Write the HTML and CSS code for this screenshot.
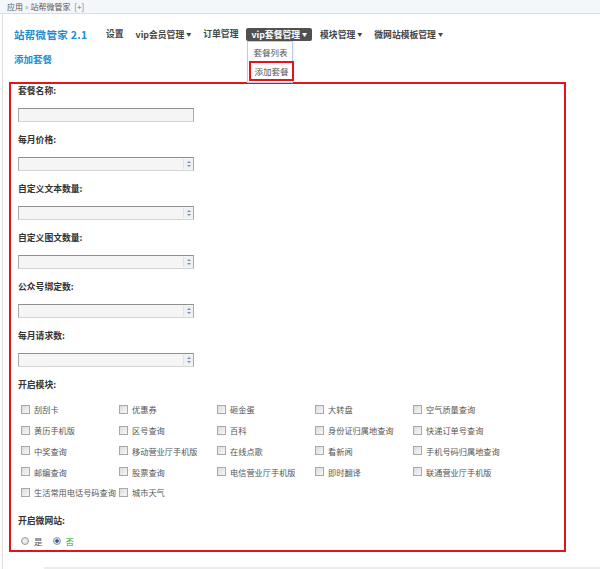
FILE: index.html
```html
<!DOCTYPE html>
<html lang="zh-CN">
<head>
    <meta charset="UTF-8">
    <title>添加套餐 - 站帮微管家</title>
    <link rel="stylesheet" href="styles.css">
</head>
<body>
    <div class="crumb">应用 <span class="sep">»</span> 站帮微管家 <span class="plus">[+]</span></div>
    <div class="main">
        <div class="head">
            <div class="brand">站帮微管家 2.1</div>
            <ul class="nav">
                <li>设置</li>
                <li>vip会员管理<span class="caret">▼</span></li>
                <li>订单管理</li>
                <li class="active">vip套餐管理<span class="caret">▼</span>
                    <ul class="dropdown">
                        <li>套餐列表</li>
                        <li class="marked">添加套餐</li>
                    </ul>
                </li>
                <li>模块管理<span class="caret">▼</span></li>
                <li>微网站模板管理<span class="caret">▼</span></li>
            </ul>
        </div>
        <div class="subtitle">添加套餐</div>

        <form class="panel">
            <div class="field">
                <label>套餐名称:</label>
                <input type="text" class="text-input">
            </div>
            <div class="field">
                <label>每月价格:</label>
                <div class="num-input"><input type="text"><span class="spin"><i class="up"></i><i class="down"></i></span></div>
            </div>
            <div class="field">
                <label>自定义文本数量:</label>
                <div class="num-input"><input type="text"><span class="spin"><i class="up"></i><i class="down"></i></span></div>
            </div>
            <div class="field">
                <label>自定义图文数量:</label>
                <div class="num-input"><input type="text"><span class="spin"><i class="up"></i><i class="down"></i></span></div>
            </div>
            <div class="field">
                <label>公众号绑定数:</label>
                <div class="num-input"><input type="text"><span class="spin"><i class="up"></i><i class="down"></i></span></div>
            </div>
            <div class="field">
                <label>每月请求数:</label>
                <div class="num-input"><input type="text"><span class="spin"><i class="up"></i><i class="down"></i></span></div>
            </div>

            <div class="field modules">
                <label>开启模块:</label>
                <div class="module-grid">
                    <span class="check"><input type="checkbox">刮刮卡</span>
                    <span class="check"><input type="checkbox">优惠券</span>
                    <span class="check"><input type="checkbox">砸金蛋</span>
                    <span class="check"><input type="checkbox">大转盘</span>
                    <span class="check"><input type="checkbox">空气质量查询</span>
                    <span class="check"><input type="checkbox">黄历手机版</span>
                    <span class="check"><input type="checkbox">区号查询</span>
                    <span class="check"><input type="checkbox">百科</span>
                    <span class="check"><input type="checkbox">身份证归属地查询</span>
                    <span class="check"><input type="checkbox">快递订单号查询</span>
                    <span class="check"><input type="checkbox">中奖查询</span>
                    <span class="check"><input type="checkbox">移动营业厅手机版</span>
                    <span class="check"><input type="checkbox">在线点歌</span>
                    <span class="check"><input type="checkbox">看新闻</span>
                    <span class="check"><input type="checkbox">手机号码归属地查询</span>
                    <span class="check"><input type="checkbox">邮编查询</span>
                    <span class="check"><input type="checkbox">股票查询</span>
                    <span class="check"><input type="checkbox">电信营业厅手机版</span>
                    <span class="check"><input type="checkbox">即时翻译</span>
                    <span class="check"><input type="checkbox">联通营业厅手机版</span>
                    <span class="check"><input type="checkbox">生活常用电话号码查询</span>
                    <span class="check"><input type="checkbox">城市天气</span>
                </div>
            </div>

            <div class="field site">
                <label>开启微网站:</label>
                <div class="radios">
                    <span class="radio"><input type="radio" name="site">是</span>
                    <span class="radio on"><input type="radio" name="site" checked>否</span>
                </div>
            </div>
        </form>

        <div class="actions">
            <button type="button">提交</button>
        </div>
    </div>
    <div class="hscroll"></div>
</body>
</html>
```

FILE: styles.css
```css
body {
    margin: 0;
    font-family: "Noto Sans CJK SC", "Liberation Sans", sans-serif;
    color: #333;
    background-color: #fff;
    overflow: hidden;
    height: 569px;
}
ul {
    list-style: none;
    margin: 0;
    padding: 0;
}
.crumb {
    height: 13px;
    line-height: 13px;
    padding-left: 7px;
    font-size: 8px;
    color: #555;
    background-color: #f3f7fc;
    border-bottom: 1px solid #d9dee6;
}
.crumb .sep {
    color: #999;
}
.crumb .plus {
    color: #5577aa;
    margin-left: 2px;
}
.main {
    margin-left: 2px;
    border-left: 1px solid #dcdcdc;
    padding-left: 6px;
    min-height: 560px;
}
.head {
    display: flex;
    align-items: center;
    padding-top: 13px;
    height: 14px;
}
.brand {
    margin-left: 5px;
    width: 88px;
    color: #1f8bd0;
    font-weight: bold;
    font-size: 10.5px;
    letter-spacing: 0.3px;
}
.nav {
    display: flex;
    gap: 4px;
}
.nav > li {
    position: relative;
    font-size: 8.8px;
    font-weight: bold;
    color: #444;
    line-height: 12px;
    padding: 0 4px;
    border-radius: 2px;
}
.nav .caret {
    font-size: 5px;
    margin-left: 2px;
    vertical-align: 2px;
}
.nav > li.active {
    background-color: #505050;
    color: #fff;
    padding: 0 5px;
}
.dropdown {
    position: absolute;
    top: 13px;
    left: 1px;
    width: 44px;
    padding: 2px 0 1px;
    background-color: #fff;
    border: 1px solid #b8d0e4;
    box-shadow: 1px 1px 2px rgba(0, 0, 0, 0.08);
}
.dropdown li {
    font-weight: normal;
    font-size: 8.5px;
    color: #555;
    line-height: 14px;
    padding: 1px 0 1px 5px;
}
.dropdown li.marked {
    margin: 1px 0 0 1px;
    width: 38px;
    padding-left: 3px;
    border: 2px solid #e3141b;
}
.subtitle {
    margin: 12px 0 0 5px;
    line-height: 12px;
    color: #1f8bd0;
    font-weight: bold;
    font-size: 9.5px;
}
.panel {
    margin-top: 17px;
    padding: 1px 0 3px 7px;
    border: 2px solid #e3141b;
    box-sizing: content-box;
    width: 546px;
}
.field label {
    display: block;
    line-height: 12px;
    font-size: 8.8px;
    font-weight: bold;
    color: #333;
}
.field {
    padding-bottom: 12px;
}
.field > .text-input,
.field > .num-input {
    margin-top: 11px;
}
.text-input,
.num-input {
    display: flex;
    width: 176px;
    height: 14px;
    box-sizing: border-box;
    border: 1px solid #a9a9a9;
    border-top-color: #8f8f8f;
    border-bottom-color: #d4d4d4;
    background-color: #f5f5f5;
    padding: 0;
    margin: 0;
    outline: none;
}
.num-input input {
    flex: 1;
    min-width: 0;
    border: none;
    background: transparent;
    padding: 0;
    outline: none;
}
.spin {
    width: 9px;
    display: flex;
    flex-direction: column;
    justify-content: center;
    align-items: center;
    gap: 2px;
    background-color: #eef0f3;
    border-left: 1px solid #dde2e8;
    margin: 1px 0;
}
.spin i {
    width: 0;
    height: 0;
    border-left: 2px solid transparent;
    border-right: 2px solid transparent;
}
.spin .up {
    border-bottom: 2px solid #7d8fa8;
}
.spin .down {
    border-top: 2px solid #7d8fa8;
}
.modules label {
    margin-bottom: 8px;
}
.module-grid {
    display: grid;
    grid-template-columns: repeat(5, 98px);
    grid-auto-rows: 20.75px;
    margin-left: 3px;
}
.check {
    display: flex;
    align-items: center;
    gap: 4px;
    font-size: 8.2px;
    color: #555;
    white-space: nowrap;
}
.check input {
    appearance: none;
    -webkit-appearance: none;
    margin: 0;
    width: 9px;
    height: 9px;
    flex: none;
    border: 1px solid #a8a8a8;
    background: linear-gradient(135deg, #dcdcdc, #f8f8f8);
    box-sizing: border-box;
}
.site {
    padding-bottom: 0;
}
.site label {
    margin-bottom: 8px;
}
.radios {
    display: flex;
    gap: 10px;
    margin-left: 3px;
    height: 12px;
    align-items: center;
}
.radio {
    display: flex;
    align-items: center;
    gap: 5px;
    font-size: 8.5px;
    color: #555;
}
.radio.on {
    color: #22aa22;
}
.radio input {
    appearance: none;
    -webkit-appearance: none;
    margin: 0;
    width: 8px;
    height: 8px;
    border-radius: 50%;
    border: 1px solid #9a9a9a;
    background: radial-gradient(circle, #f4f4f4, #d8d8d8);
    box-sizing: border-box;
}
.radio input:checked {
    background: radial-gradient(circle, #1e4d8c 0, #2b6cb0 35%, #d8dce2 45%);
}
.actions {
    margin: 12px 0 0 9px;
}
.actions button {
    font-family: inherit;
    font-size: 8.5px;
    padding: 1px 5px;
    height: 14px;
    line-height: 10px;
    border: 1px solid #9a9a9a;
    background: linear-gradient(#fafafa, #e2e2e2);
    color: #333;
}
.hscroll {
    position: fixed;
    left: 44px;
    right: 0;
    bottom: 0;
    height: 2px;
    background-color: #ececec;
}
```
